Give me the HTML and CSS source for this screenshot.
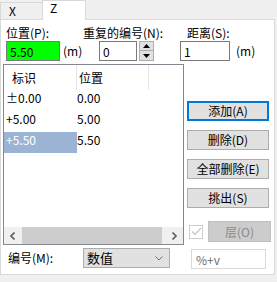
FILE: index.html
```html
<!DOCTYPE html>
<html>
<head>
    <title>Z</title>
    <link rel="stylesheet" href="styles.css">
</head>
<body>
<div class="tabs">
    <div class="tab">X</div>
    <div class="tab active">Z</div>
</div>
<div class="panel">
    <div class="fields">
        <div class="field f-pos">
            <div class="lbl">位置(P):</div>
            <div class="line">
                <input type="text" class="txt green w-pos" value="5.50">
                <span class="unit">(m)</span>
            </div>
        </div>
        <div class="field f-rep">
            <div class="lbl">重复的编号(N):</div>
            <div class="line indent">
                <input type="text" class="txt w-rep" value="0">
                <div class="spin">
                    <div class="spin-btn"><svg width="7" height="4" viewBox="0 0 7 4"><path d="M0 4 L3.5 0 L7 4 Z" fill="#000"/></svg></div>
                    <div class="spin-btn"><svg width="7" height="4" viewBox="0 0 7 4"><path d="M0 0 L3.5 4 L7 0 Z" fill="#000"/></svg></div>
                </div>
            </div>
        </div>
        <div class="field f-dist">
            <div class="lbl indent-s">距离(S):</div>
            <div class="line">
                <input type="text" class="txt w-dist" value="1">
                <span class="unit unit-far">(m)</span>
            </div>
        </div>
    </div>

    <div class="main">
        <div class="left">
            <div class="list">
                <div class="list-head">
                    <div class="hcell c1">标识</div>
                    <div class="hcell c2">位置</div>
                </div>
                <div class="list-row">
                    <div class="cell c1">±0.00</div>
                    <div class="cell c2">0.00</div>
                </div>
                <div class="list-row">
                    <div class="cell c1">+5.00</div>
                    <div class="cell c2">5.00</div>
                </div>
                <div class="list-row">
                    <div class="cell c1 sel">+5.50</div>
                    <div class="cell c2">5.50</div>
                </div>
                <div class="list-fill"></div>
                <div class="hscroll">
                    <div class="arrow"><svg width="5" height="8" viewBox="0 0 5 8"><path d="M4.5 0.5 L1 4 L4.5 7.5" fill="none" stroke="#606060" stroke-width="1.6"/></svg></div>
                    <div class="track"><div class="thumb"></div></div>
                    <div class="arrow"><svg width="5" height="8" viewBox="0 0 5 8"><path d="M0.5 0.5 L4 4 L0.5 7.5" fill="none" stroke="#606060" stroke-width="1.6"/></svg></div>
                </div>
            </div>
            <div class="row-m">
                <div class="lbl-m">编号(M):</div>
                <div class="select">
                    <span>数值</span>
                    <svg width="8" height="5" viewBox="0 0 8 5"><path d="M0.5 0.5 L4 4 L7.5 0.5" fill="none" stroke="#707070" stroke-width="1"/></svg>
                </div>
            </div>
        </div>

        <div class="right">
            <button type="button" class="btn focus">添加(A)</button>
            <button type="button" class="btn">删除(D)</button>
            <button type="button" class="btn">全部删除(E)</button>
            <button type="button" class="btn">挑出(S)</button>
            <div class="check-row">
                <span class="check"><svg width="11" height="9" viewBox="0 0 11 9"><path d="M1 4.5 L4 7.5 L10 1" fill="none" stroke="#c4c4c4" stroke-width="1.2"/></svg></span>
                <button type="button" class="btn disabled">层(O)</button>
            </div>
            <input type="text" class="fmt" value="%+v">
        </div>
    </div>
</div>
</body>
</html>
```

FILE: styles.css
```css
body {
    margin: 0;
    width: 277px;
    height: 282px;
    background-color: #f0f0f0;
    font-family: "Noto Sans CJK SC", sans-serif;
    font-size: 12px;
    line-height: 16px;
    color: #000;
    overflow: hidden;
}

/* tabs */
.tabs {
    display: flex;
    align-items: flex-end;
    height: 19px;
}

.tab {
    box-sizing: border-box;
    width: 43px;
    height: 17px;
    border: 1px solid #d9d9d9;
    border-bottom: none;
    background-color: #f0f0f0;
    padding-left: 8px;
    line-height: 16px;
}

.tab.active {
    position: relative;
    z-index: 1;
    width: 44px;
    height: 20px;
    margin-bottom: -1px;
    margin-left: -1px;
    background-color: #fff;
    padding-left: 7px;
    line-height: 14px;
}

/* page */
.panel {
    box-sizing: border-box;
    width: 275px;
    height: 256px;
    border: 1px solid #d9d9d9;
    background-color: #fff;
}

.fields {
    display: flex;
    padding-top: 5px;
    padding-left: 5px;
}

.f-pos { width: 77px; }
.f-rep { width: 97px; }

.lbl {
    white-space: nowrap;
    height: 16px;
}

.indent-s { margin-left: 7px; }

.line {
    display: flex;
    align-items: center;
    height: 20px;
}

.line.indent { margin-left: 16px; }

.txt {
    box-sizing: border-box;
    height: 20px;
    margin: 0;
    border: 1px solid #7a7a7a;
    padding: 0 3px;
    font-family: inherit;
    font-size: 12px;
    background-color: #fff;
    outline: none;
}

.green { background-color: #00ff00; }
.w-pos { width: 54px; }
.w-rep { width: 38px; }
.w-dist { width: 50px; }

.unit { margin-left: 3px; }
.unit-far { margin-left: 6px; }

.spin {
    display: flex;
    flex-direction: column;
    margin-left: 2px;
    width: 15px;
    height: 20px;
}

.spin-btn {
    box-sizing: border-box;
    height: 10px;
    border: 1px solid #adadad;
    background-color: #e1e1e1;
    display: flex;
    align-items: center;
    justify-content: center;
}

.spin-btn + .spin-btn { border-top: none; }

/* list and buttons */
.main {
    display: flex;
    margin-top: 3px;
    padding-left: 2px;
}

.list {
    box-sizing: border-box;
    width: 181px;
    height: 181px;
    border: 1px solid #828790;
    display: flex;
    flex-direction: column;
}

.list-head, .list-row {
    display: flex;
}

.list-head { height: 25px; }
.list-row { height: 21px; }

.hcell {
    box-sizing: border-box;
    line-height: 25px;
    border-right: 1px solid #e5e5e5;
}

.c1 { width: 73px; }
.c2 { width: 72px; }

.hcell.c1 { padding-left: 8px; }
.hcell.c2 { padding-left: 2px; }

.cell {
    box-sizing: border-box;
    line-height: 15px;
}

.cell.c1 { padding-left: 2px; }

.cell.sel {
    background-color: #9bb4d3;
    color: #fff;
}

.list-fill { flex: 1; }

.hscroll {
    display: flex;
    height: 17px;
    background-color: #f0f0f0;
}

.arrow {
    width: 17px;
    display: flex;
    align-items: center;
    justify-content: center;
}

.track {
    flex: 1;
    padding-left: 1px;
}

.thumb {
    width: 140px;
    height: 17px;
    background-color: #cdcdcd;
}

.row-m {
    display: flex;
    align-items: center;
    margin-top: 3px;
    height: 20px;
}

.lbl-m {
    width: 75px;
    padding-left: 5px;
}

.select {
    box-sizing: border-box;
    width: 87px;
    height: 20px;
    border: 1px solid #adadad;
    background-color: #e1e1e1;
    display: flex;
    align-items: center;
    justify-content: space-between;
    padding: 0 6px 0 3px;
    font-size: 13px;
}

.right {
    display: flex;
    flex-direction: column;
    margin-left: 3px;
    padding-top: 37px;
}

.btn {
    box-sizing: border-box;
    width: 82px;
    height: 20px;
    margin: 0 0 9px 0;
    padding: 0;
    border: 1px solid #adadad;
    background-color: #e1e1e1;
    font-family: inherit;
    font-size: 12px;
    line-height: 16px;
    color: #000;
}

.btn.focus { border: 2px solid #0078d7; }

.check-row {
    display: flex;
    align-items: center;
    margin-top: 4px;
    height: 21px;
}

.check {
    box-sizing: border-box;
    width: 14px;
    height: 14px;
    margin-left: 2px;
    border: 1px solid #cccccc;
    display: flex;
    align-items: center;
    justify-content: center;
}

.btn.disabled {
    width: 63px;
    height: 21px;
    margin: 0 0 0 5px;
    background-color: #cccccc;
    border-color: #bfbfbf;
    color: #8a8a8a;
}

.fmt {
    box-sizing: border-box;
    width: 75px;
    height: 20px;
    margin: 7px 0 0 4px;
    border: 1px solid #d9d9d9;
    padding: 0 4px;
    font-family: inherit;
    font-size: 12px;
    color: #6d6d6d;
    outline: none;
}
```
